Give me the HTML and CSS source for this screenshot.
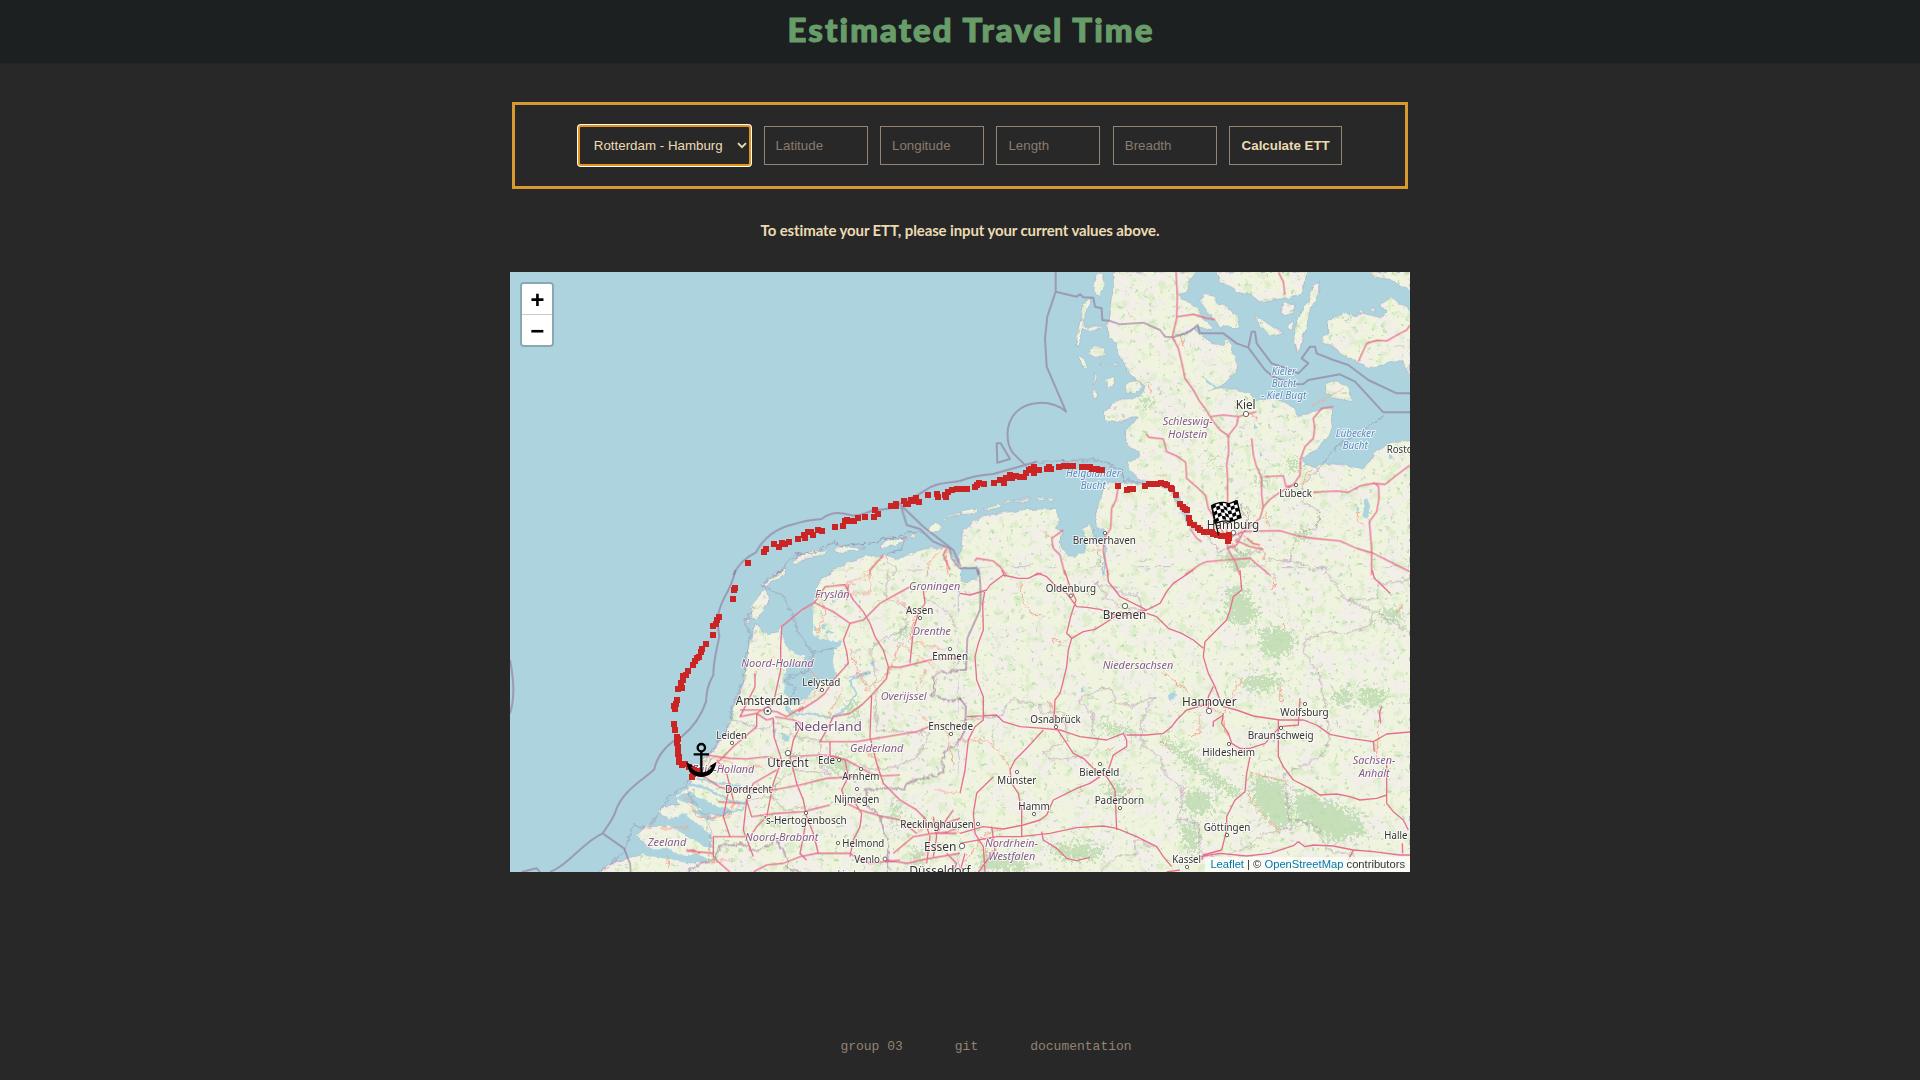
FILE: index.html
```html
<!DOCTYPE html>
<html lang="en">
<head>
<meta charset="utf-8">
<title>Estimated Travel Time</title>
<link rel="stylesheet" href="styles.css">
</head>
<body>
<header class="header"><h1 class="title">Estimated Travel Time</h1></header>
<main class="main">
  <form class="form">
    <div class="route">
      <select class="route-select" aria-label="Route"><option>Rotterdam - Hamburg</option></select>
      <svg class="chevron" viewBox="0 0 10 7"><path d="M1 1.2 5 5.2 9 1.2"/></svg>
    </div>
    <input class="field" placeholder="Latitude">
    <input class="field" placeholder="Longitude">
    <input class="field" placeholder="Length">
    <input class="field" placeholder="Breadth">
    <button class="submit" type="button">Calculate ETT</button>
  </form>
  <p class="message">To estimate your ETT, please input your current values above.</p>
  <section class="map">
    <svg class="map-canvas" viewBox="0 0 2700 1800">
      <defs>
        <g id="land">
          <g transform="translate(-30 -21)">
            <path d="M988 930L1010 912 1045 893 1075 880 1100 873 1140 877 1150 868 1165 872 1190 885 1215 872 1250 860 1290 850 1320 846 1345 850 1360 880 1382 912V932Z"/>
            <path d="M877 893Q885 870 930 862L985 855 960 870 920 878 885 898ZM1003 855L1015 842 1050 850 1098 848 1060 857 1010 862ZM1140 840L1160 828 1222 820 1215 830 1180 840 1145 852ZM1233 815L1248 804 1242 818ZM1285 793L1297 775 1328 784 1315 798 1290 800ZM1342 752L1380 744 1380 748 1345 755ZM820 930L858 913 850 925 835 930ZM1332 762L1340 759 1338 768Z"/>
          </g>
          <g transform="translate(1350 -21)">
            <path d="M458 21L462 70 452 110 450 155 440 180 445 215 470 235 472 260 490 290 505 325 530 345 555 362 550 385 520 405 490 405 460 415 435 440 435 465 470 472 500 462 535 455 520 475 498 495 497 525 510 545 540 560 537 580 503 590 510 610 530 640 560 650 610 656 640 674 655 710 675 740 690 780 712 795 700 795 680 775 670 745 645 710 632 675 600 664 550 660 500 655 440 655 430 690 412 720 406 760 410 780 430 795 440 820 412 838 395 800 385 780 365 790 383 835 370 862 345 875 325 873 310 850 297 830 310 800 285 790 300 765 283 732 240 734 200 735 150 740 80 750 40 770 10 800 5 860-5 875-5 910 45 905 58 910 60 932H1352V525L1290 535 1240 565 1230 590 1200 615 1150 600 1110 595 1070 605 1035 600 1028 580 1060 560 1100 520 1115 480 1112 432 1060 440 1020 455 985 415 940 400 900 405 885 412 870 385 830 373 780 370 745 378 780 362 800 350 828 320 830 275 812 265 815 240 795 225 790 240 755 235 720 205 700 190 665 212 640 215 680 200 712 182 740 195 755 190 735 170 715 140 690 115 662 105 660 85 680 75 685 50 705 28 710 21Z"/>
            <path d="M770 21L780 50 815 65 850 90 875 88 900 110 970 100 1020 88 1035 60 1040 21ZM720 105L735 88 765 95 775 120 800 125 828 150 837 187 815 190 790 180 785 192 765 165 745 145 735 125ZM885 150L930 180 968 205 935 210 900 185ZM1078 50L1075 85 1050 130 1040 180 1020 250 1008 258 1000 215 1015 160 1045 110 1060 60ZM1100 165L1150 145 1190 155 1205 145 1260 160 1280 140 1258 122 1290 95 1350 135V332L1330 290 1290 285 1270 300 1230 310 1190 290 1150 270 1120 245 1085 230 1085 215 1105 205ZM1230 21H1352V80L1320 60 1290 42 1245 35ZM960 140L975 110 1005 120 1000 145 975 150Z"/>
            <path d="M405 45L412 30 432 28 430 70 418 93 403 80ZM375 105L392 103 368 165 380 185 437 180 405 197 370 192 352 245 350 230 360 180ZM385 262L400 245 430 250 432 270 405 278ZM355 275L370 285 382 306 372 310ZM435 345L460 337 466 355 447 369ZM496 362L510 350 535 348 547 365 525 382 500 380ZM418 298L445 294 430 302ZM450 298L475 294 465 302ZM402 325L410 340 403 360ZM398 375L410 378 412 395 402 400ZM1095 385L1100 352 1130 348 1165 372 1175 408 1130 400ZM5 742L50 733 55 742 8 747ZM72 730L118 720 120 726 78 735ZM130 716L152 707 150 713ZM160 706L208 698 206 706 165 711ZM225 700L252 697 248 703ZM263 705L283 700 278 709ZM985 180L1000 170 995 195ZM1195 140L1205 130 1210 145ZM1230 135L1240 130 1245 142Z"/>
          </g>
          <g transform="translate(-30 894)">
            <path d="M762 160L775 172 800 195 832 190 845 170 943 95 945 60 960 30 1003 0H1382V932H300V906L345 875 395 862 430 850 480 862V850L440 830 410 795 440 768 500 772 500 745 475 725 490 708 540 705 525 680 560 655 575 625 590 590 620 560 640 540 670 500 695 450 705 400 725 360 740 290 745 230 758 200Z"/>
            <path d="M755 145L758 100 795 57 808 80 802 105 770 148ZM783 42L800 35 858 3 850 14 800 46ZM735 150L750 146 748 158Z"/>
          </g>
          <path transform="translate(1350 894)" d="M60-10H1352V932H-5V35L25 35 50 30 58 0Z"/>
        </g>
        <g id="water">
          <g transform="translate(-30 894)">
            <path d="M845 172L943 98 938 150 935 190 960 208 1030 215 1003 240 997 290 1012 315 985 335 958 328 950 350 925 380 895 398 864 412 880 442 857 425 855 410 865 390 855 365 850 330 860 300 868 280 905 278 913 260 865 238 848 200ZM525 685L570 660 600 685 650 710 700 722 745 705 720 722 660 738 625 732 585 708ZM490 755L555 730 600 770 640 800 625 810 645 835 615 830 565 800 530 780 520 772ZM450 835L500 835 520 850 560 858 590 850 625 868 618 880 560 880 530 870 470 862 430 855ZM570 720L610 722 650 750 622 750Z"/>
            <path class="channel" d="M865 415L890 435 940 430 990 444 1040 418 1068 370 1050 332 1112 304M560 640L620 655 690 690 740 702M590 625L650 640 720 645"/>
          </g>
          <g transform="translate(1350 -21)"><path d="M1212 705L1225 700 1230 730 1218 765 1210 750ZM1190 720L1198 735 1190 750ZM935 410L950 430 938 432ZM880 475L895 485 878 492ZM900 560L910 570 900 575ZM1290 570L1300 575 1290 585ZM1150 165L1165 160 1160 172Z"/><path class="channel" d="M600 650L635 668 655 700 683 745 690 775 720 795 760 808 820 810M770 370L735 345M420 790L435 850 430 930"/></g>
          <g transform="translate(1350 894)"><path d="M623 380L640 367 652 375 635 390ZM360 355L370 350 370 370 360 367ZM20 0H60L52 32 28 22Z"/></g>
          <g transform="translate(-30 894)"><path d="M960 170L980 160 972 182ZM985 175L1000 185 978 190ZM1110 275L1130 272 1118 288ZM940 165L952 180 940 182ZM815 480L830 475 825 500ZM843 490L870 500 865 515 845 510ZM995 85L1010 92 998 100Z"/></g>
        </g>
        <mask id="land-mask"><use href="#land" fill="#fff"/></mask>
        <filter id="fields" x="0" y="0" width="100%" height="100%" color-interpolation-filters="sRGB"><feTurbulence type="fractalNoise" baseFrequency=".016" numOctaves="4" seed="5"/><feColorMatrix values="0 0 0 0 .94 0 0 0 0 .955 0 0 0 0 .87 5 0 0 0 -1.9"/></filter>
        <filter id="meadow" x="0" y="0" width="100%" height="100%" color-interpolation-filters="sRGB"><feTurbulence type="fractalNoise" baseFrequency=".035" numOctaves="4" seed="11"/><feColorMatrix values="0 0 0 0 .87 0 0 0 0 .93 0 0 0 0 .8 0 7 0 0 -4"/></filter>
        <filter id="woods" x="0" y="0" width="100%" height="100%" color-interpolation-filters="sRGB"><feTurbulence type="fractalNoise" baseFrequency=".07" numOctaves="3" seed="23"/><feColorMatrix values="0 0 0 0 .76 0 0 0 0 .87 0 0 0 0 .71 0 0 9 0 -5.9"/></filter>
        <filter id="ragged" x="-5%" y="-5%" width="110%" height="110%"><feTurbulence type="fractalNoise" baseFrequency=".06" numOctaves="3" seed="3"/><feDisplacementMap in="SourceGraphic" scale="22" xChannelSelector="R" yChannelSelector="G"/></filter>
        <filter id="torn" x="-5%" y="-5%" width="110%" height="110%"><feTurbulence type="fractalNoise" baseFrequency=".1" numOctaves="2" seed="8"/><feDisplacementMap in="SourceGraphic" scale="90" xChannelSelector="R" yChannelSelector="G"/></filter>
        <filter id="coast" x="0" y="0" width="100%" height="100%"><feTurbulence type="fractalNoise" baseFrequency=".04" numOctaves="3" seed="2"/><feDisplacementMap in="SourceGraphic" scale="14" xChannelSelector="R" yChannelSelector="G"/></filter>
      </defs>
      <rect class="sea" width="2700" height="1800"/>
      <g filter="url(#coast)">
        <use href="#land" class="land"/>
        <g mask="url(#land-mask)">
          <rect width="2700" height="1800" filter="url(#fields)"/>
          <rect width="2700" height="1800" filter="url(#meadow)"/>
          <rect width="2700" height="1800" filter="url(#woods)"/>
        </g>
        <use href="#water" class="water"/>
      </g>
      <g class="forest" filter="url(#torn)">
        <path transform="translate(1350 894)" d="M800 60L850 50 870 90 900 130 850 170 800 150ZM900 170L990 180 1010 220 960 265 900 245ZM875 615L975 640 985 700 1000 770 960 780 900 730 875 680ZM1010 660L1120 700 1200 740 1220 790 1120 815 1050 770 1000 740ZM680 660L750 670 760 720 700 740 665 700ZM660 760L710 760 715 830 690 855 665 800ZM1110 385L1160 350 1180 390 1150 410ZM840 325L940 315 980 340 900 365 850 350ZM600 490L680 540 760 610 850 670 820 680 700 600 620 530ZM260 830L380 820 450 840 380 870 300 870ZM60 850L190 860 200 906H60ZM1200 350L1280 360 1260 410 1200 400ZM440 640L500 640 490 680 450 690ZM1250 130L1300 110 1340 140 1300 160ZM410 460L500 470 560 500 430 480Z"/>
        <path transform="translate(1350 -21)" d="M980 590L1015 580 1025 610 985 620ZM1010 790L1045 785 1050 820 1015 830ZM880 640L920 635 940 650 890 660ZM530 400L560 395 580 420 560 430ZM780 870L850 860 880 890 830 920ZM750 570L770 580 760 610Z"/>
        <path transform="translate(-30 894)" d="M970 580L1030 550 1060 590 1010 610ZM1040 400L1070 390 1080 440 1050 450ZM860 530L900 560 880 590ZM760 740L850 750 830 770ZM1170 720L1200 690 1190 800ZM1230 830L1290 860 1240 890ZM1190 170L1230 180 1210 220Z"/>
      </g>
      <g id="borders" filter="url(#ragged)">
        <g transform="translate(-30 -21)"><path class="border-thin" d="M820 930L850 915 865 888 890 870 950 862 1000 833 1020 842 1130 832 1145 820 1215 820 1205 852 1155 872 1160 890 1185 905 1180 930M1200 815L1225 800 1275 802"/></g>
        <g transform="translate(1350 -21)"><path class="border-thin" d="M1278 450L1220 490 1130 545 1070 620 1030 655 1025 710 1080 740 1070 790 1030 800 1000 840 985 888 1040 900 1060 915 1095 905V930M985 888L930 885 900 855 850 870 820 845 860 770 870 735 840 720 860 770 870 800M820 845L780 860 740 810 770 800M230 590L305 588 410 585 485 615 495 645 550 655M305 588L340 620M430 930L400 790"/></g>
        <g transform="translate(-30 894)"><path class="border-thin" d="M850 0L785 45 850 78 900 195 937 248 1010 232M937 248L925 300 850 330 885 350 865 400M765 110L733 155 750 190 740 250 730 340 690 430 695 455 640 540 560 640 500 690 450 775 415 770 400 765 375 835 340 880 300 906M555 655L600 725 640 740 690 725 760 685 820 680 850 720 920 710M695 445L745 465 790 480 820 460 860 470 880 500 960 510 960 590 990 610 880 600 830 640 820 690M1165 0L1155 85 1220 110 1215 180 1145 210 1110 240 1125 300 1130 480 1290 490M1270 80L1350 130 1370 180M1290 490L1250 560 1190 590 1110 600 1080 580M1110 305L1045 322M620 740L635 790 625 860"/></g>
        <g transform="translate(1350 894)"><path class="border-thin" d="M400 40L450 50 490 70 540 80 545 120 490 115 450 90 410 40M0 450L120 440 160 380 190 400 240 405 245 430 310 425 325 510 250 550 270 570 380 560 415 510 395 490 400 430 355 390 410 360 450 355 470 395 510 410 580 380 545 450 545 520 600 560 620 620 670 655 655 745 715 760 720 850 740 860 840 845 920 790 995 775 970 615 1080 560 1110 510 1100 430 1080 320 1030 240 1035 210 1095 185 1160 190 1230 165 1240 120 1160 90 1095 0M1240 120L1350 190M1160 90L1250 85 1260 40 1350 30M1005 750L1070 770 1100 840 1180 855 1180 906M420 906L470 860 530 850 525 810 580 830"/></g>
      </g>
      <g id="national-borders">
        <g transform="translate(-30 -21)"><path class="border" d="M700 930Q720 885 768 862C790 820 830 790 880 778Q920 765 965 762C1000 735 1030 745 1060 752 1090 752 1100 740 1125 735 1170 735 1190 725 1202 715 1240 695 1260 688 1272 678 1300 655 1330 655 1380 648M1202 720L1220 780 1260 792 1300 830 1348 850 1355 880 1380 912M1202 720L1270 785 1360 855 1382 905"/></g>
        <g transform="translate(1350 -21)"><path class="border" d="M0 648Q40 632 100 627L195 600 230 590M287 21V80L262 155 255 220 260 305 318 440C270 400 200 410 170 440 130 480 140 540 160 565L200 605M287 80L350 95 360 88 370 97 400 98 405 125 425 130 427 165 450 168 480 178 550 173 600 195 615 215 640 217 690 200 712 180 720 205 790 205 830 235 865 248 875 200 885 200 890 235 935 295 985 312 1015 325 1045 295 1025 280 1050 245 1065 245 1070 265 1120 285 1165 300 1225 345 1310 385H1350M865 248L915 315 940 335 1000 358 1030 357 1045 345 1140 328 1185 350 1270 442H1350M110 535H122L150 582 112 593ZM0 910L50 910 55 930"/></g>
        <g transform="translate(-30 894)"><path class="border" d="M706 0Q700 35 672 85C650 130 650 150 658 200 650 240 640 270 640 315 620 350 620 370 618 395 600 450 570 480 545 500 500 520 470 560 463 598 430 630 370 660 348 720 340 750 320 770 308 790 250 815 200 890 150 905M308 790L372 835 390 880 392 906M65 906L110 895 120 906M30 270Q50 370 30 430"/><path class="border" filter="url(#ragged)" d="M560 906L600 880 640 870 660 830 720 820 775 845 830 810 860 860 860 890 900 906M1380 300L1305 310 1300 375 1350 395 1380 385M1380 510L1330 550 1330 610 1230 635 1210 655 1100 660 1095 700 1140 740 1165 830 1160 906"/></g>
        <g transform="translate(1350 894)"><path class="border" d="M55 0Q65 40 60 120L22 205 18 300H0M0 385L18 410 15 480 0 510"/></g>
      </g>
      <g class="minor" filter="url(#ragged)">
        <path transform="translate(-30 -21)" d="M1155 870L1110 910 1080 930M1325 850L1290 890 1280 930M1335 860L1345 930"/>
        <path transform="translate(1350 -21)" d="M655 205L665 240 650 250M565 355L570 385M510 145L520 160M875 440L890 470M590 632H615M1060 420L1150 370M1055 610L1020 660 1045 640M915 740L930 800M810 800L820 850M850 810L910 855 915 900M1200 740L1190 765 1210 785M240 790L280 820M395 855H430M650 130L670 125"/>
        <path transform="translate(-30 894)" d="M960 60L975 130 950 190M1040 45L1110 10 1110 70 1050 70M1180 80L1250 130 1230 210 1330 240M1050 240L1100 360 1165 310 1200 220 1300 290M760 310L820 260M930 300L970 350 870 430M1030 360L980 440M560 680L590 740 690 740 700 690M480 775L570 770M500 860L505 900M600 880L690 870M1280 300L1250 360M1270 440L1340 480 1360 590M610 600L640 560 700 580M740 590L790 590M1310 660L1370 670M1080 540L1140 570M1250 790L1320 750 1380 790M1240 870L1330 820M560 840L610 850"/>
        <path transform="translate(1350 894)" d="M180 40L190 100 210 130 240 135M280 220V205L320 220M265 395L290 450M0 510L80 510 130 560 150 600M10 880L80 790 130 780M80 800V890M605 305L680 360 710 400 790 430 820 370 845 325M720 430V490L690 500M790 440L800 500M960 345L965 400M970 160Q985 160 970 180M910 0L950 30 935 60M1310 130L1325 100M870 610L970 630M855 650L885 710 960 785M680 650L660 670M600 510L630 540M1260 430L1250 560M520 655L480 690M360 650V670M440 545L460 530"/>
      </g>
      <g class="roads">
        <path transform="translate(-30 -21)" d="M1150 870L1110 915V930M1340 850L1330 870 1350 915"/>
        <path transform="translate(1350 -21)" d="M648 21L652 90 650 160 637 215 655 250 667 300 675 340 700 375 718 408 735 430 760 470 780 495 805 512 806 560 800 600 803 640 803 720 800 800 803 850 825 890 840 930M805 512L830 480 835 455 790 450 750 455M835 455L858 448 890 440M652 155L700 148 740 160 765 163M558 505L567 517 610 522 620 560 650 573 677 592 680 640 712 668 737 692 745 730 765 762 800 820 850 800 900 760 910 725 930 703 955 685 1000 660 1020 630 1022 580 1035 545 1060 520 1064 490 1060 460 1085 430 1120 425M875 520L880 570 888 600 905 640 905 690 910 730M912 635L970 632 978 665 1000 660M1060 682L1090 680 1130 678 1165 682 1200 663 1240 655 1275 658 1310 630 1350 600M1240 652L1256 665 1257 700 1250 740 1228 770 1235 850 1235 930M850 800L900 798 960 797 1010 812 1060 820 1140 828 1190 850 1240 865 1290 890 1350 920M850 800L830 840 800 850M825 825L870 845 910 853M675 930L720 898 740 890 800 885 870 880 930 930M955 21L970 50 975 90M1195 290L1220 235 1250 226 1280 228 1320 205 1340 195 1350 180M475 665L468 705 455 730 452 790 433 820 430 860 445 930M310 795L275 820 280 850 300 870 315 930M45 888L50 880 100 888 120 905 140 930M225 930L245 925M690 790L710 820 725 830M860 820L880 836 900 840"/>
        <path transform="translate(-30 894)" d="M845 170L875 145 905 120 943 98 975 50 1035 45 1060 90 1090 125 1110 160 1125 200 1150 240 1165 290 1160 325 1115 375 1085 405 1050 430 1000 440 980 480 960 515 1070 515 1110 508 1160 500 1250 485 1300 465 1380 465M943 98L1000 125 1050 160 1090 150 1140 100 1185 75 1230 50M1050 160L1030 210 1040 245 1045 280 1000 330 975 370 950 390 895 425M845 170L842 230 842 300 820 400 770 430 770 470 700 530 660 570 620 600 600 620M765 310V350L740 400 720 440 770 430M770 430L800 450 820 445 822 500 845 570 800 560 740 567 690 565 620 555M825 440L880 450 905 460 880 510 870 560 890 640 910 690 920 740 910 800 900 850 920 870M870 560L960 555 1000 558 1040 570 1110 610 1150 618 1200 615M990 515L990 560 1035 570 1045 620 1025 660 1040 700 1080 720 1140 738 1200 750 1250 790M570 600L620 625 660 652 700 660 760 655 820 660 900 645 980 625 1070 620M845 570L820 640 810 690 800 740 770 770 750 800 700 800 640 800 640 860 660 880 690 906M700 690L680 610 650 570M740 690L755 740 830 730 910 725 950 715 990 705M740 690L730 780 760 860M600 850L580 840 560 842 640 850M760 906L800 885 850 880 900 860 950 850 1050 850 1080 870 1110 880 1200 870M955 850L940 790 920 740M1060 690L1085 730 1080 770 1060 810 1050 860M1115 375L1112 440 1110 500 1130 580 1150 640 1200 690 1250 720 1280 750M1270 60L1275 100 1255 130 1240 180 1230 280M1165 290L1200 292 1250 280 1290 270 1380 265M690 640L670 740 690 800M1045 45L1040 90M720 420L780 420 830 425 860 440 910 410M1160 870L1220 880 1290 865 1380 850M1270 740L1290 800 1280 880M1360 720L1310 790 1345 785 1380 770M1180 850L1240 800 1300 790 1370 790M655 695L720 700M830 600L760 640 740 690M1300 740L1310 800 1300 860M1230 760L1320 765 1380 745M1340 850L1370 880 1360 906"/>
        <path transform="translate(1350 894)" d="M0 70L30 75 80 60 90 45 130 15 175 25 205 25 235 10 260 20 290 50 320 70 350 110 380 112 420 118 480 140 520 130 560 120 600 100 620 65 640 40 700 0M125 0L135 20M75 60L68 100 70 180 55 220 45 260 50 330 70 380 70 450 45 470 25 510 15 600 0 670M313 0L330 50 348 90 332 140 320 190 335 205 325 240 320 290 308 340 300 370 285 390 282 440 290 475 320 520 340 550 370 565 400 595 440 620 465 660 470 780M335 205L370 185 405 178 450 150 485 125M442 0L445 35 465 60 480 80 510 95 560 120M560 130L590 140 625 175 665 190 700 210 730 235M840 0L845 60 820 80 810 120 800 150 770 180 735 215 730 260 745 310 765 350 780 390 790 410 830 420 880 438 960 450 1030 450 1070 465 1110 493 1170 505 1240 515 1280 492 1350 486M20 440L110 435 130 455 180 470 250 475 300 480 360 500 440 510 490 490 500 510 500 530 460 555 445 600M500 495L560 495 610 490 635 470 650 450 680 420 750 400M790 430L785 460 805 490 815 520 840 535 870 535 915 520 960 470 1015 465 1020 385M870 560L860 610 855 665 825 690 800 740 800 780 785 840 730 855 725 870M955 450L955 560 970 590 1000 630 1050 655 1080 675 1130 672 1170 680 1200 690 1250 685 1280 675 1280 700 1300 725 1330 750 1345 780M250 480L200 535 165 570 150 600 155 640 175 670 185 720 185 800M420 620L390 640 350 655 280 690 260 735 240 750 190 765 130 777 70 770 0 790M470 775L430 768 350 773 270 790 180 800 110 800 0 820M470 775L530 800 590 830 610 860 635 890M245 785L250 810 290 835 320 865 350 872 390 862M620 906L660 900M720 860L780 850 860 858 930 850 1000 827 1015 815 1035 830 1060 825 1120 828 1180 840 1240 845 1320 855 1350 855M1240 515L1243 545M1265 410L1258 430 1262 460M1327 820L1328 850M1180 840L1165 870M100 620L50 670 40 730 45 790 70 830 75 906M15 850L0 906M95 770L105 840 55 906M1237 0L1243 25 1265 45 1290 70M745 415L745 380 760 350M790 435L760 455 760 470M1280 675L1280 570"/>
      </g>
      <g id="dots"></g>
      <g id="labels"></g>
      <g id="track"></g>
      <g class="anchor" transform="translate(574 1413)"><circle cx="0" cy="14" r="11"/><path d="M0 25V96M-23 34H23"/><path class="solid" d="M-45 57L-24 70-31 73C-23 84-12 88 0 89 12 88 23 84 31 73L24 70 45 57C41 86 25 101 0 102-25 101-41 86-45 57Z"/></g>
      <g class="flag" transform="translate(1350 -21)"><path class="flag-cloth" d="M755 722C775 712 790 708 804 716 815 717 824 707 831 707L843 758C830 760 824 770 808 769 795 764 782 769 765 775Z"/><g id="checks"></g><path class="pole" d="M755 722L776 812"/></g>
    </svg>
    <div class="zoom"><button class="zoom-btn" type="button">+</button><button class="zoom-btn" type="button">−</button></div>
    <div class="attribution"><a>Leaflet</a> | © <a>OpenStreetMap</a> contributors</div>
  </section>
</main>
<footer class="footer"><a>group 03</a><a>git</a><a>documentation</a></footer>
<script src="map.js"></script>
</body>
</html>
```
FILE: styles.css
```css
* { box-sizing: border-box; }
body { margin: 0; height: 1080px; overflow: hidden; display: flex; flex-direction: column; background: #282828; color: #ebdbb2; font-family: "Liberation Sans", Arial, sans-serif; }
.header { height: 64px; flex: none; display: flex; justify-content: center; background: #1d2021; padding: 8px 0 0 20px; border-bottom: 1px solid #242424; }
.title { margin: 0; font: 900 33px/42px Lato, sans-serif; color: #689d6a; white-space: nowrap; letter-spacing: 2.05px; margin-right: -2px; -webkit-text-stroke: 1.1px #689d6a; }
.main { display: flex; flex-direction: column; align-items: center; padding-top: 38px; }
.form { width: 896px; height: 87px; border: 3px solid #d79931; display: flex; justify-content: center; align-items: center; gap: 12.4px; }
.route { position: relative; width: 173px; height: 41px; margin-right: .4px; }
.route-select { appearance: none; width: 100%; height: 100%; border: 2px solid #e59417; border-radius: 3px; box-shadow: 0 0 0 1px #fff; outline: 0; background: #282828; color: #ebdbb2; font: 13.33px "Liberation Sans", Arial, sans-serif; padding: 0 0 0 14px; }
.chevron { position: absolute; right: 4px; top: 17px; width: 10px; height: 7px; fill: none; stroke: #ebdbb2; stroke-width: 1.9; }
.field { width: 104px; height: 39px; border: 1px solid #928374; background: #282828; padding: 0 11px; font: 13.33px "Liberation Sans", Arial, sans-serif; color: #ebdbb2; }
.field::placeholder { color: #8a7b6e; opacity: 1; }
.submit { width: 113px; height: 39px; border: 1px solid #928374; background: #282828; padding: 0; font: bold 13.33px "Liberation Sans", Arial, sans-serif; color: #ebdbb2; }
.message { margin: 30px 0 0; height: 53px; font: 700 15px/22px Lato, sans-serif; letter-spacing: -.12px; white-space: nowrap; }
.map { position: relative; width: 900px; height: 600px; overflow: hidden; background: #aad3df; }
.map-canvas { display: block; width: 900px; height: 600px; }
.sea, .water { fill: #acd3de; }
.channel { fill: none; stroke: #acd3de; stroke-width: 7; }
.land { fill: #f2efe9; stroke: #a9a3bd; stroke-width: 2; }
.forest { fill: #b9d8ac; opacity: .75; }
.border, .border-thin { fill: none; stroke: #8d618b; stroke-opacity: .5; stroke-width: 6; stroke-linejoin: round; }
.border-thin { stroke-width: 3; stroke-opacity: .48; }
.roads { fill: none; stroke: #e6708c; stroke-width: 4; stroke-linejoin: round; }
.minor { fill: none; stroke: #f7a58e; stroke-width: 3; }
.label { font-family: "Noto Sans", sans-serif; paint-order: stroke; stroke: rgba(255,255,255,.7); stroke-width: 6; stroke-linejoin: round; fill: #333; font-size: 31px; }
.label.city { font-size: 37px; }
.label.region { fill: #845b86; font-style: italic; font-size: 33px; }
.label.country { fill: #75507b; font-size: 38px; }
.label.bay { fill: #5a8bbd; font-style: italic; font-size: 31px; }
.dot { fill: #fff; stroke: #555; stroke-width: 2.6; }
.dot-core { fill: #444; }
.mark { fill: #cb2424; shape-rendering: crispEdges; }
.anchor { fill: none; stroke: #000; stroke-width: 7; }
.anchor .solid { fill: #000; stroke: none; }
.flag-cloth { fill: #fff; stroke: #000; stroke-width: 4; }
.check { fill: #000; }
.pole { fill: none; stroke: #111; stroke-width: 4; }
.zoom { position: absolute; left: 10px; top: 10px; border: 2px solid rgba(0,0,0,.2); border-radius: 4px; background-clip: padding-box; display: flex; flex-direction: column; }
.zoom-btn { width: 30px; height: 30px; border: 0; padding: 6px 0 0 1px; background: #fff; color: #000; font: bold 24px/24px "Liberation Mono", monospace; border-radius: 0 0 2px 2px; }
.zoom-btn:first-child { height: 31px; border-bottom: 1px solid #ccc; border-radius: 2px 2px 0 0; }
.attribution { position: absolute; right: 0; bottom: 0; height: 15px; padding: 0 5px; background: rgba(255,255,255,.7); color: #333; font-size: 11.2px; line-height: 15px; white-space: nowrap; }
.attribution a { color: #0078a8; }
.footer { margin-top: auto; height: 44px; display: flex; justify-content: center; gap: 52px; padding-left: 52px; color: #928374; font: 13px/22px "Liberation Mono", monospace; }
```
FILE: map.js
```js
const NS = "http://www.w3.org/2000/svg";
function add(parent, name, attrs, text) {
  const el = document.createElementNS(NS, name);
  for (const key in attrs) el.setAttribute(key, attrs[key]);
  if (text) el.textContent = text;
  document.getElementById(parent).appendChild(el);
}
// Origin of each map quadrant on the 2700 x 1800 canvas.
const origin = { nw: [-30, -21], ne: [1350, -21], sw: [-30, 894], se: [1350, 894] };

// quadrant, text, left, baseline, width, style
const labels = [
  ["ne", "Kiel", 827, 432, 60, "city"], ["ne", "Hamburg", 740, 791, 158, "city"],
  ["ne", "Lübeck", 958, 695, 98, ""], ["ne", "Bremerhaven", 338, 838, 190, ""], ["ne", "Rostock", 1280, 565, 107, ""],
  ["ne", "Schleswig-", 608, 480, 150, "region"], ["ne", "Holstein", 624, 519, 118, "region"],
  ["ne", "Kieler", 935, 331, 73, "bay"], ["ne", "Bucht", 935, 367, 74, "bay"], ["ne", "- Kiel Bugt", 903, 403, 136, "bay"],
  ["ne", "Lübecker", 1127, 517, 118, "bay"], ["ne", "Bucht", 1148, 553, 75, "bay"],
  ["ne", "Helgoländer", 318, 637, 164, "bay"], ["ne", "Bucht", 362, 672, 75, "bay"],
  ["sw", "Amsterdam", 707, 404, 194, "city"], ["sw", "Utrecht", 802, 592, 124, "city"], ["sw", "Nederland", 882, 484, 204, "country"],
  ["sw", "Leiden", 649, 507, 92, ""], ["sw", "Lelystad", 907, 348, 114, ""], ["sw", "Ede", 954, 581, 51, ""],
  ["sw", "Arnhem", 1027, 630, 111, ""], ["sw", "Nijmegen", 1003, 699, 135, ""], ["sw", "Dordrecht", 676, 669, 140, ""],
  ["sw", "'s-Hertogenbosch", 792, 763, 248, ""], ["sw", "Helmond", 1027, 831, 126, ""], ["sw", "Venlo", 1063, 878, 77, ""],
  ["sw", "Assen", 1218, 132, 82, ""], ["sw", "Emmen", 1297, 271, 107, ""], ["sw", "Enschede", 1285, 480, 134, ""],
  ["sw", "Recklinghausen", 1201, 773, 221, ""], ["sw", "Essen", 1272, 843, 97, "city"], ["sw", "Düsseldorf", 1228, 916, 184, "city"],
  ["sw", "Fryslân", 945, 84, 104, "region"], ["sw", "Groningen", 1227, 60, 154, "region"], ["sw", "Drenthe", 1238, 194, 115, "region"],
  ["sw", "Noord-Holland", 724, 292, 217, "region"], ["sw", "Overijssel", 1142, 389, 138, "region"], ["sw", "Gelderland", 1050, 546, 160, "region"],
  ["sw", "Zuid-Holland", 577, 608, 186, "region"], ["sw", "Zeeland", 443, 828, 116, "region"], ["sw", "Noord-Brabant", 735, 812, 220, "region"],
  ["sw", "Limburg", 1010, 924, 110, "region"],
  ["se", "Oldenburg", 257, 67, 151, ""], ["se", "Bremen", 428, 148, 131, "city"], ["se", "Hannover", 666, 409, 164, "city"],
  ["se", "Osnabrück", 211, 459, 151, ""], ["se", "Bielefeld", 358, 617, 120, ""], ["se", "Münster", 112, 642, 117, ""],
  ["se", "Hamm", 175, 719, 94, ""], ["se", "Paderborn", 404, 703, 148, ""], ["se", "Hildesheim", 727, 558, 158, ""],
  ["se", "Braunschweig", 863, 508, 198, ""], ["se", "Wolfsburg", 961, 438, 145, ""], ["se", "Göttingen", 731, 784, 140, ""],
  ["se", "Kassel", 637, 879, 86, ""], ["se", "Halle", 1273, 806, 69, ""],
  ["se", "Niedersachsen", 428, 297, 212, "region"], ["se", "Nordrhein-", 75, 830, 159, "region"], ["se", "Westfalen", 85, 869, 141, "region"],
  ["se", "Sachsen-", 1178, 582, 128, "region"], ["se", "Anhalt", 1196, 621, 93, "region"]
];
for (const [q, text, x, y, w, kind] of labels)
  add("labels", "text", { x: origin[q][0] + x, y: origin[q][1] + y, textLength: w, lengthAdjust: "spacingAndGlyphs", class: "label " + kind }, text);

// quadrant, x, y, radius
const dots = [
  ["ne", 858, 447, 8], ["ne", 820, 803, 7], ["ne", 1008, 660, 5], ["ne", 435, 804, 5],
  ["sw", 803, 423, 11], ["sw", 864, 549, 8], ["sw", 696, 519, 5], ["sw", 966, 360, 5], ["sw", 1017, 570, 5], ["sw", 1083, 597, 5],
  ["sw", 1071, 657, 5], ["sw", 747, 681, 5], ["sw", 918, 729, 5], ["sw", 1014, 819, 5], ["sw", 1155, 867, 6], ["sw", 1260, 144, 5],
  ["sw", 1350, 237, 5], ["sw", 1353, 492, 5], ["se", 54, 762, 5], ["se", 6, 828, 8], ["se", 333, 77, 5], ["se", 495, 108, 8],
  ["se", 747, 423, 8], ["se", 288, 471, 5], ["se", 420, 582, 5], ["se", 171, 606, 5], ["se", 222, 732, 5], ["se", 480, 714, 5],
  ["se", 807, 522, 5], ["se", 963, 474, 5], ["se", 1035, 402, 5], ["se", 801, 795, 5], ["se", 681, 891, 5]
];
for (const [q, x, y, r] of dots) add("dots", "circle", { cx: origin[q][0] + x, cy: origin[q][1] + y, r, class: "dot" });
add("dots", "circle", { cx: 773, cy: 1317, r: 4, class: "dot-core" });

// Recorded vessel positions, centre of each marker.
const track = {
  nw: [744,894, 792,861, 798,852, 822,837, 837,846, 846,834, 855,836, 867,831, 894,822, 912,810, 915,819, 924,801, 933,800, 939,810, 954,795, 966,798, 1005,785, 1029,783, 1035,768, 1041,765, 1050,768, 1062,768, 1075,759, 1095,756, 1122,756, 1125,735, 1134,747, 1173,723, 1188,717, 1188,723, 1212,708, 1218,717, 1224,717, 1232,706, 1238,708, 1248,699, 1257,712, 1284,690, 1311,687, 1314,696, 1334,690, 1338,696, 1344,681, 1356,675, 1372,672, 1380,672],
  ne: [0,672, 10,672, 20,672, 45,666, 51,660, 58,655, 72,657, 102,654, 120,645, 132,654, 138,640, 150,630, 156,640, 168,634, 180,637, 192,637, 198,625, 207,616, 213,613, 222,606, 222,624, 228,615, 236,615, 261,612, 267,606, 273,612, 298,606, 312,603, 325,603, 339,603, 366,606, 378,606, 390,606, 396,612, 410,612, 417,615, 426,615, 474,663, 502,675, 510,672, 518,672, 555,663, 567,657, 579,657, 592,657, 604,654, 615,657, 622,660, 633,669, 636,672, 648,690, 660,717, 669,726, 675,733, 681,736, 687,759, 689,774, 702,780, 714,790, 720,796, 733,801, 745,801, 757,802, 760,807, 772,811, 784,812, 794,814, 806,811, 804,827, 806,819],
  sw: [705,54, 702,60, 699,87, 657,141, 651,150, 648,163, 640,168, 639,195, 618,222, 606,237, 603,247, 598,261, 591,265, 585,273, 579,285, 564,303, 558,315, 549,318, 549,330, 543,340, 545,353, 534,357, 531,390, 528,402, 522,408, 525,417, 522,462, 525,480, 531,501, 534,507, 530,519, 534,531, 535,540, 535,553, 537,561, 537,576, 546,584, 555,582, 567,590, 576,596, 582,600, 579,612, 576,621, 591,604]
};
for (const q in track)
  for (let i = 0; i < track[q].length; i += 2)
    add("track", "rect", { x: origin[q][0] + track[q][i] - 9, y: origin[q][1] + track[q][i + 1] - 9, width: 18, height: 18, class: "mark" });

// Checkered cloth: seven columns by five rows following the wave of the flag.
const wave = [0, -7, -11, -10, -5, -7, -12, -15];
for (let c = 0; c < 7; c++)
  for (let r = 0; r < 5; r++)
    if ((c + r) % 2 === 0) {
      const at = (i, j) => (755 + i * 10.9 + j * 2.2) + "," + (722 + wave[i] + j * 10.4);
      add("checks", "polygon", { points: [at(c, r), at(c + 1, r), at(c + 1, r + 1), at(c, r + 1)].join(" "), class: "check" });
    }
```
